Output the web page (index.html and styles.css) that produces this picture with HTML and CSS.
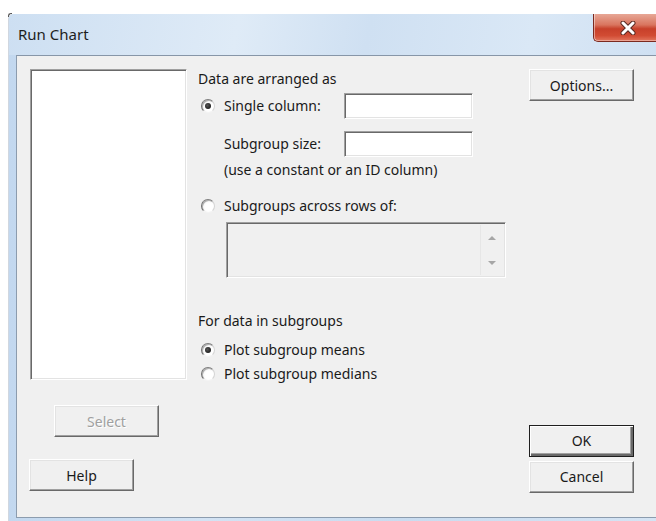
FILE: index.html
```html
<!DOCTYPE html>
<html lang="en">
<head>
<meta charset="utf-8">
<title>Run Chart</title>
<link rel="stylesheet" href="styles.css">
</head>
<body>
<div class="window">
  <div class="titlebar">
    <span class="title">Run Chart</span>
    <button class="close" aria-label="Close">
      <svg width="16" height="14" viewBox="0 0 16 14">
        <path d="M3 2 L13 12 M13 2 L3 12" stroke="#5a2a22" stroke-width="5" stroke-linecap="round"/>
        <path d="M3 2 L13 12 M13 2 L3 12" stroke="#ffffff" stroke-width="3" stroke-linecap="round"/>
      </svg>
    </button>
  </div>
  <div class="client">
    <div class="col-left">
      <div class="listbox"></div>
      <button class="btn btn-select" disabled>Select</button>
      <button class="btn btn-help">Help</button>
    </div>
    <div class="col-mid">
      <div class="label label-data">Data are arranged as</div>
      <div class="row row-single">
        <span class="radio checked"></span>
        <span class="rlabel">Single column:</span>
        <span class="field"></span>
      </div>
      <div class="row row-size">
        <span class="flabel">Subgroup size:</span>
        <span class="field"></span>
      </div>
      <div class="hint">(use a constant or an ID column)</div>
      <div class="row row-across">
        <span class="radio"></span>
        <span class="rlabel">Subgroups across rows of:</span>
      </div>
      <div class="area">
        <div class="spin">
          <span class="arrow up"></span>
          <span class="arrow down"></span>
        </div>
      </div>
      <div class="label label-sub">For data in subgroups</div>
      <div class="row row-means">
        <span class="radio checked"></span>
        <span class="rlabel">Plot subgroup means</span>
      </div>
      <div class="row row-medians">
        <span class="radio"></span>
        <span class="rlabel">Plot subgroup medians</span>
      </div>
    </div>
    <div class="col-right">
      <button class="btn btn-options">Options...</button>
      <button class="btn btn-ok">OK</button>
      <button class="btn btn-cancel">Cancel</button>
    </div>
  </div>
</div>
</body>
</html>
```
FILE: styles.css
```css
html, body {
  margin: 0;
  padding: 0;
  background: #ffffff;
  overflow: hidden;
}

body {
  width: 656px;
  height: 521px;
  font-family: "Noto Sans", "DejaVu Sans", sans-serif;
  font-size: 14px;
  color: #1a1a1a;
}

/* window frame */
.window {
  margin: 14px 0 0 9px;
  width: 652px;
  height: 507px;
  background: linear-gradient(to right, #c3d8ef, #d3e3f4 30%, #c9dcf0 60%, #d5e4f4);
  border-top-left-radius: 5px;
  box-shadow: -1px 0 0 rgba(120, 140, 165, 0.35);
  display: flex;
  flex-direction: column;
  position: relative;
}

/* dark corner pixel of the frame */
.window::before {
  content: "";
  position: absolute;
  left: -1px;
  top: -1px;
  width: 3px;
  height: 3px;
  border-top-left-radius: 3px;
  border-top: 1px solid #555555;
  border-left: 1px solid #555555;
}

.titlebar {
  height: 41px;
  display: flex;
  align-items: flex-start;
  background: linear-gradient(100deg, #cddff2 0%, #dfebf7 35%, #cfe0f2 55%, #dae8f6 80%, #cfe0f2 100%);
  border-top-left-radius: 5px;
}

.title {
  margin: 10px 0 0 9px;
  font-size: 15px;
  line-height: 20px;
  color: #1e1e1e;
}

.close {
  margin-left: auto;
  width: 68px;
  height: 28px;
  padding: 0;
  border: 1px solid #7b2a20;
  border-top: none;
  border-right: none;
  border-bottom-left-radius: 5px;
  background: linear-gradient(to bottom, #e7a796 0%, #d9755f 40%, #c7402a 55%, #d14b33 80%, #e2765e 100%);
  box-shadow: inset 1px 0 0 rgba(255,255,255,0.45), inset 0 -1px 0 rgba(255,255,255,0.35);
  display: flex;
  align-items: center;
  padding-left: 26px;
}

.close svg {
  display: block;
}

/* dialog body */
.client {
  margin-left: 7px;
  background: #f0f0f0;
  border-top: 1px solid #8796a8;
  border-left: 1px solid #8c9cae;
  border-bottom: 1px solid #8c9cae;
  display: flex;
  padding: 13px 0 0 13px;
  box-sizing: border-box;
  height: 463px;
}

.col-left {
  width: 157px;
  display: flex;
  flex-direction: column;
  align-items: flex-start;
}

.col-mid {
  width: 308px;
  margin-left: 11px;
  display: flex;
  flex-direction: column;
}

.col-right {
  width: 105px;
  margin-left: 23px;
  display: flex;
  flex-direction: column;
  padding-bottom: 24px;
}

/* sunken controls */
.listbox, .field, .area {
  box-sizing: border-box;
  border-style: solid;
  border-width: 1px;
  border-color: #a0a0a0 #ffffff #ffffff #a0a0a0;
  box-shadow: inset 1px 1px 0 #696969, inset -1px -1px 0 #e3e3e3;
}

.listbox {
  width: 157px;
  height: 311px;
  background: #ffffff;
}

/* raised push buttons */
.btn {
  box-sizing: border-box;
  width: 105px;
  height: 32px;
  padding: 0;
  font-family: inherit;
  font-size: 14px;
  color: #1a1a1a;
  background: #f0f0f0;
  border-style: solid;
  border-width: 1px;
  border-color: #ffffff #696969 #696969 #ffffff;
  box-shadow: inset -1px -1px 0 #a0a0a0, inset 1px 1px 0 #e3e3e3;
}

.btn:disabled {
  color: #a0a0a0;
  text-shadow: 1px 1px 0 #ffffff;
}

.btn-select {
  margin: 25px 0 0 24px;
}

.btn-help {
  margin: 22px 0 0 -1px;
}

.btn-options {
  margin-top: 0;
}

.btn-ok {
  margin-top: auto;
  padding-bottom: 2px;
  border-color: #1f1f1f;
  box-shadow: inset 1px 1px 0 #ffffff, inset -2px -2px 0 #696969, inset -3px -3px 0 #a0a0a0;
}

.btn-cancel {
  margin-top: 4px;
  padding-bottom: 2px;
}

/* text rows */
.label, .hint, .row {
  line-height: 18px;
  white-space: nowrap;
}

.label-data {
  margin-top: 1px;
}

.row {
  display: flex;
  align-items: center;
}

.radio {
  box-sizing: border-box;
  width: 14px;
  height: 14px;
  margin-left: 3px;
  border-radius: 50%;
  border: 1px solid;
  border-color: #7e7e7e #d4d4d4 #f4f4f4 #6e6e6e;
  background: radial-gradient(circle at 60% 60%, #ffffff 40%, #e6e6e6 100%);
  box-shadow: inset 1px 1px 0 #b0b0b0;
  position: relative;
  flex: none;
}

.radio.checked::after {
  content: "";
  position: absolute;
  left: 3px;
  top: 3px;
  width: 6px;
  height: 6px;
  border-radius: 50%;
  background: radial-gradient(circle at 40% 40%, #555555, #0a0a0a);
}

.rlabel {
  margin-left: 9px;
}

.row-single {
  margin-top: 5px;
  height: 26px;
}

.row-single .rlabel {
  width: 120px;
}

.field {
  width: 129px;
  height: 26px;
  background: #ffffff;
}

.row-size {
  margin-top: 12px;
  height: 26px;
}

.flabel {
  margin-left: 26px;
  width: 120px;
}

.hint {
  margin: 4px 0 0 26px;
}

.row-across {
  margin-top: 18px;
}

.area {
  margin: 7px 0 0 28px;
  width: 280px;
  height: 56px;
  background: #f0f0f0;
  display: flex;
  justify-content: flex-end;
}

.spin {
  width: 22px;
  margin: 2px 2px 2px 0;
  border-left: 1px solid #e6e6e6;
  display: flex;
  flex-direction: column;
  justify-content: space-between;
  align-items: center;
  padding: 11px 0 10px;
}

.arrow {
  width: 0;
  height: 0;
  border-left: 4px solid transparent;
  border-right: 4px solid transparent;
}

.arrow.up {
  border-bottom: 4px solid #a6a6a6;
}

.arrow.down {
  border-top: 4px solid #a6a6a6;
}

.label-sub {
  margin-top: 34px;
}

.row-means {
  margin-top: 11px;
}

.row-medians {
  margin-top: 6px;
}
```
